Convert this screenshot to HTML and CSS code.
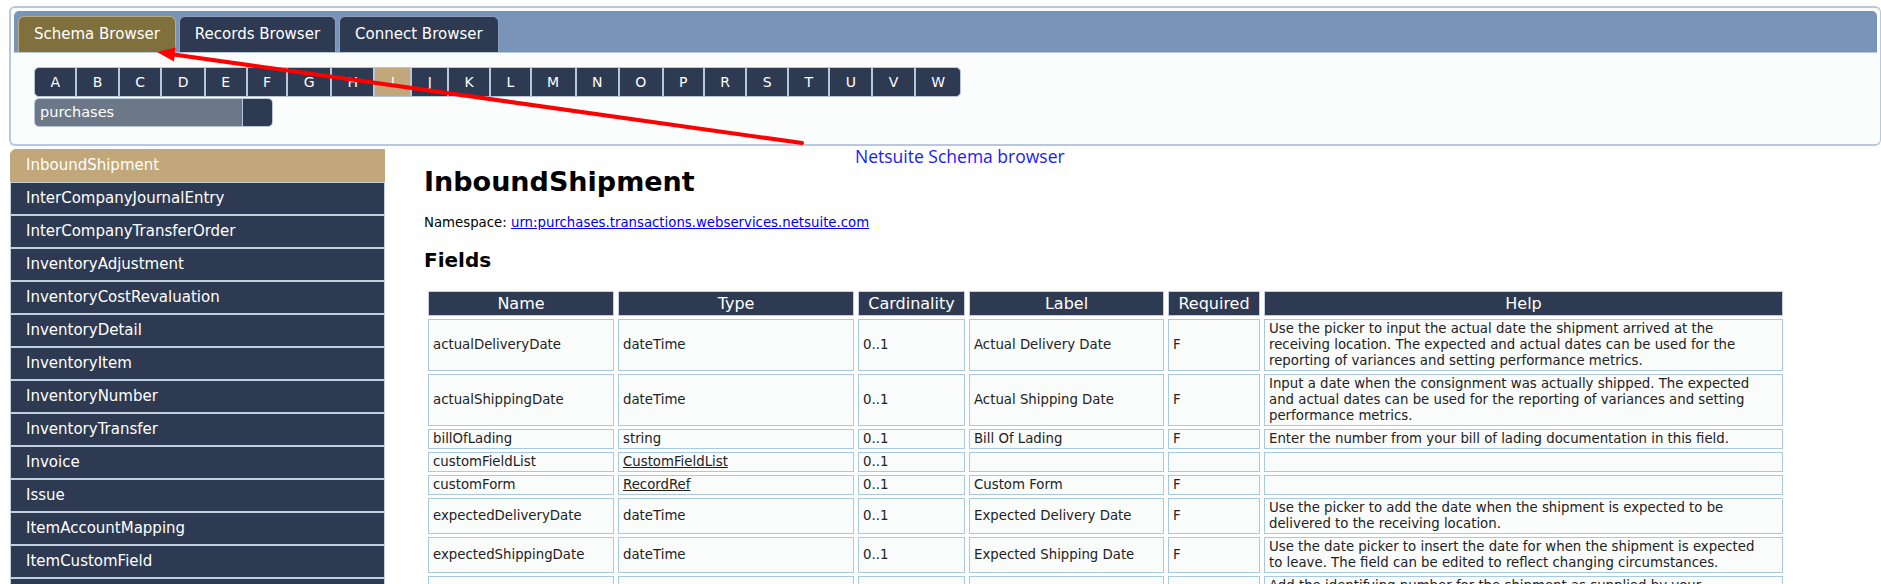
FILE: index.html
```html
<!DOCTYPE html>
<html lang="en">
<head>
  <meta charset="UTF-8">
  <title>Netsuite Schema Browser</title>
  <link rel="stylesheet" href="styles.css">
</head>
<body>
  <div class="tabs">
    <ul class="tab-nav">
      <li class="tab active">Schema Browser</li>
      <li class="tab">Records Browser</li>
      <li class="tab">Connect Browser</li>
    </ul>
    <div class="panel">
      <div class="letters">
        <span class="letter">A</span>
        <span class="letter">B</span>
        <span class="letter">C</span>
        <span class="letter">D</span>
        <span class="letter">E</span>
        <span class="letter">F</span>
        <span class="letter">G</span>
        <span class="letter">H</span>
        <span class="letter active">I</span>
        <span class="letter">J</span>
        <span class="letter">K</span>
        <span class="letter">L</span>
        <span class="letter">M</span>
        <span class="letter">N</span>
        <span class="letter">O</span>
        <span class="letter">P</span>
        <span class="letter">R</span>
        <span class="letter">S</span>
        <span class="letter">T</span>
        <span class="letter">U</span>
        <span class="letter">V</span>
        <span class="letter">W</span>
      </div>
      <div class="select">
        <span class="select-text">purchases</span>
        <span class="select-btn"></span>
      </div>
    </div>
  </div>

  <div class="main">
    <ul class="sidebar">
      <li class="active">InboundShipment</li>
      <li>InterCompanyJournalEntry</li>
      <li>InterCompanyTransferOrder</li>
      <li>InventoryAdjustment</li>
      <li>InventoryCostRevaluation</li>
      <li>InventoryDetail</li>
      <li>InventoryItem</li>
      <li>InventoryNumber</li>
      <li>InventoryTransfer</li>
      <li>Invoice</li>
      <li>Issue</li>
      <li>ItemAccountMapping</li>
      <li>ItemCustomField</li>
      <li>ItemDemandPlan</li>
      <li>ItemFulfillment</li>
    </ul>

    <div class="content">
      <h1>InboundShipment</h1>
      <p class="ns">Namespace: <a href="#">urn:purchases.transactions.webservices.netsuite.com</a></p>
      <h2>Fields</h2>
      <table class="fields">
        <thead>
          <tr>
            <th class="c-name">Name</th>
            <th class="c-type">Type</th>
            <th class="c-card">Cardinality</th>
            <th class="c-label">Label</th>
            <th class="c-req">Required</th>
            <th class="c-help">Help</th>
          </tr>
        </thead>
        <tbody>
          <tr>
            <td>actualDeliveryDate</td>
            <td>dateTime</td>
            <td>0..1</td>
            <td>Actual Delivery Date</td>
            <td>F</td>
            <td class="help">Use the picker to input the actual date the shipment arrived at the receiving location. The expected and actual dates can be used for the reporting of variances and setting performance metrics.</td>
          </tr>
          <tr>
            <td>actualShippingDate</td>
            <td>dateTime</td>
            <td>0..1</td>
            <td>Actual Shipping Date</td>
            <td>F</td>
            <td class="help">Input a date when the consignment was actually shipped. The expected and actual dates can be used for the reporting of variances and setting performance metrics.</td>
          </tr>
          <tr>
            <td>billOfLading</td>
            <td>string</td>
            <td>0..1</td>
            <td>Bill Of Lading</td>
            <td>F</td>
            <td class="help">Enter the number from your bill of lading documentation in this field.</td>
          </tr>
          <tr>
            <td>customFieldList</td>
            <td><a href="#">CustomFieldList</a></td>
            <td>0..1</td>
            <td></td>
            <td></td>
            <td class="help"></td>
          </tr>
          <tr>
            <td>customForm</td>
            <td><a href="#">RecordRef</a></td>
            <td>0..1</td>
            <td>Custom Form</td>
            <td>F</td>
            <td class="help"></td>
          </tr>
          <tr>
            <td>expectedDeliveryDate</td>
            <td>dateTime</td>
            <td>0..1</td>
            <td>Expected Delivery Date</td>
            <td>F</td>
            <td class="help">Use the picker to add the date when the shipment is expected to be delivered to the receiving location.</td>
          </tr>
          <tr>
            <td>expectedShippingDate</td>
            <td>dateTime</td>
            <td>0..1</td>
            <td>Expected Shipping Date</td>
            <td>F</td>
            <td class="help">Use the date picker to insert the date for when the shipment is expected to leave. The field can be edited to reflect changing circumstances.</td>
          </tr>
          <tr>
            <td>externalDocNumber</td>
            <td>string</td>
            <td>0..1</td>
            <td>External Doc. Number</td>
            <td>F</td>
            <td class="help">Add the identifying number for the shipment as supplied by your shipping partner. This number can be used to track the shipment.</td>
          </tr>
        </tbody>
      </table>
    </div>
  </div>

  <!-- annotation -->
  <div class="note">Netsuite Schema browser</div>
  <svg class="arrow" width="1881" height="584" viewBox="0 0 1881 584">
    <line x1="802" y1="143" x2="172" y2="54.3" stroke="#ff0000" stroke-width="4" stroke-linecap="round"/>
    <polygon points="157,52 175.6,47.6 174,61.4" fill="#ff0000"/>
  </svg>
</body>
</html>
```

FILE: styles.css
```css
body {
  margin: 0;
  position: relative;
  background: #fff;
  font-family: "DejaVu Sans", Verdana, sans-serif;
  color: #222;
}

ul {
  list-style: none;
  margin: 0;
  padding: 0;
}

/* Tabs */
.tabs {
  margin: 6px 0 0 9px;
  border: 2px solid #b9c8dc;
  border-right-width: 1px;
  border-radius: 6px;
  padding: 3px;
  background: #fbfcfc;
}

.tab-nav {
  display: flex;
  gap: 3px;
  height: 36px;
  padding: 5px 0 0 4px;
  background: #7a93b8;
  border-radius: 5px 5px 0 0;
  border-bottom: 1px solid #b9c8dc;
}

.tab {
  height: 35px;
  line-height: 35px;
  padding: 0 15px;
  font-size: 15px;
  color: #fff;
  background: #2e3a52;
  border: 1px solid #8d9fbd;
  border-bottom: none;
  border-radius: 6px 6px 0 0;
}

.tab.active {
  background: #7f703e;
  border-color: #b8ad85;
}

.panel {
  padding: 14px 20px 14px;
}

.letters {
  display: flex;
}

.letter {
  height: 28px;
  line-height: 28px;
  padding: 0 15.4px;
  font-size: 14px;
  color: #fff;
  background: #2e3a52;
  border: 1px solid #b9c6d7;
}

.letter:first-child {
  border-radius: 5px 0 0 5px;
}

.letter:last-child {
  border-radius: 0 5px 5px 0;
}

.letter.active {
  background: #c1a779;
}

.select {
  display: flex;
  width: 239px;
  height: 29px;
  margin-top: 1px;
  border-radius: 5px;
  overflow: hidden;
  box-sizing: border-box;
  border: 1px solid #b9c6d7;
}

.select-text {
  flex: 1;
  padding-left: 5px;
  line-height: 27px;
  font-size: 14.5px;
  color: #fff;
  background: #6c7788;
  border-right: 1px solid #b9c6d7;
}

.select-btn {
  width: 29px;
  background: #2e3a52;
}

/* Main area */
.main {
  display: flex;
  align-items: flex-start;
  margin-top: 2px;
  padding-left: 10px;
}

.sidebar {
  width: 375px;
  flex: none;
  margin-top: 1px;
}

.sidebar li {
  height: 31px;
  line-height: 31px;
  padding-left: 15px;
  font-size: 15px;
  color: #fff;
  background: #2e3a52;
  border: 1px solid #c3cfdf;
}

.sidebar li.active {
  background: #c1a779;
  border-color: #c1a779;
  border-radius: 6px 0 0 0;
}

.content {
  margin-left: 39px;
}

h1 {
  margin: 19px 0 0;
  font-size: 27px;
  line-height: 30px;
  color: #000;
}

.ns {
  margin: 18px 0 0;
  font-size: 13.3px;
  line-height: 16px;
  color: #000;
}

.ns a {
  color: #0000ee;
}

h2 {
  margin: 17px 0 0;
  font-size: 20px;
  line-height: 24px;
  color: #000;
}

/* Fields table */
.fields {
  margin-top: 16px;
  width: 1363px;
  table-layout: fixed;
  border-collapse: separate;
  border-spacing: 4px 3px;
}

.fields th {
  box-sizing: border-box;
  padding: 2px 4px;
  line-height: 19px;
  font-size: 16px;
  font-weight: normal;
  color: #fff;
  background: #2e3a52;
  border: 1px solid #c3cfdf;
}

.c-name { width: 186px; }
.c-type { width: 236px; }
.c-card { width: 107px; }
.c-label { width: 195px; }
.c-req { width: 92px; }
.c-help { width: 519px; }

.fields td {
  padding: 1px 4px;
  line-height: 16px;
  font-size: 13.3px;
  color: #222;
  background: #fafcfc;
  border: 1px solid #a9c9e1;
  vertical-align: middle;
}

.fields td.help {
  padding-right: 25px;
}

.fields td a {
  color: #222;
}

/* Annotation */
.note {
  position: absolute;
  left: 855px;
  top: 145px;
  font-family: "Open Sans", sans-serif;
  font-size: 17.5px;
  line-height: 22px;
  color: #1a1aff;
}

.arrow {
  position: absolute;
  left: 0;
  top: 0;
  pointer-events: none;
}
```
